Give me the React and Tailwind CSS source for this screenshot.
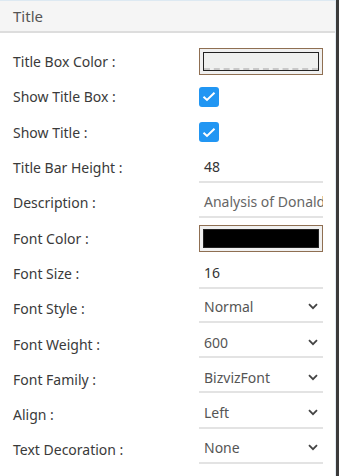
import React from "react";

const Chevron = () => (
  <svg width="10" height="7" viewBox="0 0 10 7" className="shrink-0">
    <path d="M1 1.2 L5 5.2 L9 1.2" fill="none" stroke="#444" strokeWidth="1.8" />
  </svg>
);

const Check = () => (
  <div className="w-[20px] h-[20px] rounded-[3px] bg-[#2196f3] flex items-center justify-center">
    <svg width="14" height="11" viewBox="0 0 14 11">
      <path d="M1.5 5.8 L5 9 L12.5 1.8" fill="none" stroke="#fff" strokeWidth="2" />
    </svg>
  </div>
);

const ColorBox = ({ fill }) => (
  <div className="w-[124px] h-[27px] border border-[#8f6f52] bg-[#f0f0f0] p-[3px]">
    <div
      className={
        "w-full h-full border border-[#222] " +
        (fill === "black" ? "bg-black" : "bg-[#eff0ef]")
      }
    >
      {fill !== "black" && (
        <div className="h-full border-b-2 border-dashed border-b-[#c8c8c8]" />
      )}
    </div>
  </div>
);

const Text = ({ v, clip }) => (
  <div className="w-[124px] h-[31px] border-b-2 border-[#e3e3e3] flex items-center pl-[5px] overflow-hidden">
    <span className={"whitespace-nowrap " + (clip ? "text-[#666]" : "text-[#333]")}>{v}</span>
  </div>
);

const Select = ({ v }) => (
  <div className="w-[124px] h-[30px] border-b-2 border-[#e3e3e3] flex items-center justify-between pl-[5px] pr-[5px] mt-[-2px]">
    <span className="text-[#555]">{v}</span>
    <Chevron />
  </div>
);

const rows = [
  ["Title Box Color :", <ColorBox fill="light" />],
  ["Show Title Box :", <Check />],
  ["Show Title :", <Check />],
  ["Title Bar Height :", <Text v="48" />],
  ["Description :", <Text v="Analysis of Donald" clip />],
  ["Font Color :", <ColorBox fill="black" />],
  ["Font Size :", <Text v="16" />],
  ["Font Style :", <Select v="Normal" />],
  ["Font Weight :", <Select v="600" />],
  ["Font Family :", <Select v="BizvizFont" />],
  ["Align :", <Select v="Left" />],
  ["Text Decoration :", <Select v="None" />],
];

export default function App() {
  return (
    <div
      className="w-[339px] h-[476px] flex bg-white overflow-hidden text-[14px]"
      style={{ fontFamily: '"Noto Sans", sans-serif' }}
    >
      <div className="w-[336px] h-full flex flex-col border-r border-[#e2ebf2] border-t border-t-[#dde9f2]">
        <div className="h-[32px] bg-[#f5f5f5] border-b-2 border-[#dddddd] flex items-center pl-[13px] text-[15px] text-[#555]">
          Title
        </div>
        <div className="flex flex-col pt-[11px]">
          {rows.map(([label, ctrl], i) => (
            <div key={i} className="h-[35.3px] flex items-center">
              <div className="w-[199px] pl-[13px] text-[#3a3a3a]">{label}</div>
              <div className="flex items-center">{ctrl}</div>
            </div>
          ))}
        </div>
      </div>
      <div className="w-[3px] h-full bg-[#3b3b3b]" />
    </div>
  );
}
